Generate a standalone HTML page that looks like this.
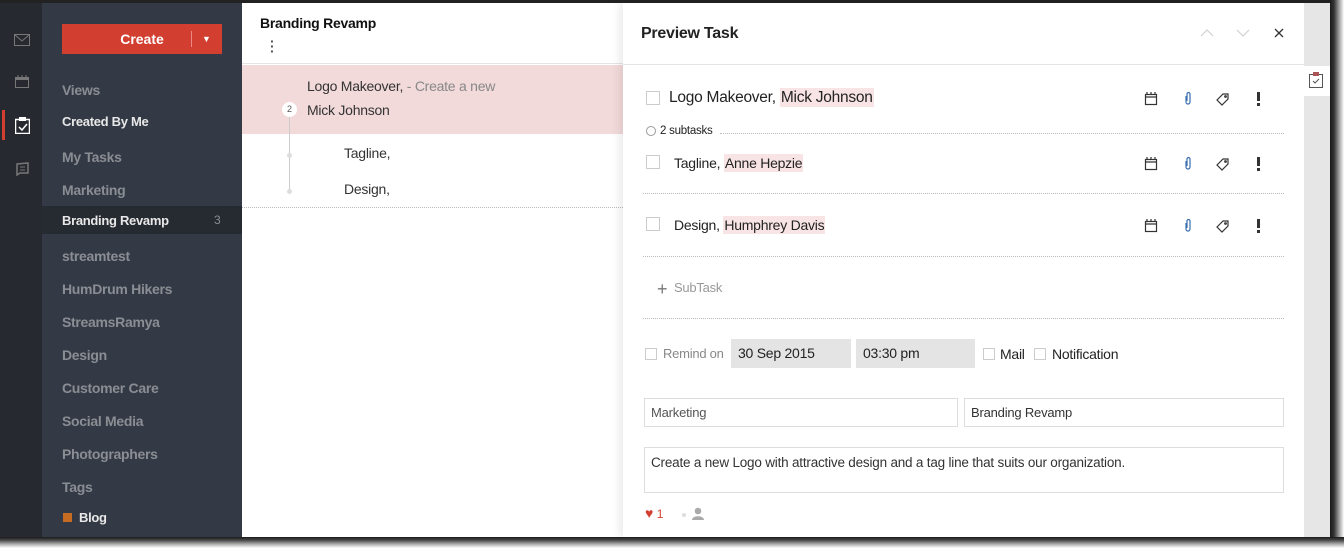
<!DOCTYPE html>
<html><head><meta charset="utf-8"><style>
*{box-sizing:border-box;margin:0;padding:0}
body{width:1344px;height:548px;background:#fff;font-family:"Liberation Sans",sans-serif;position:relative;overflow:hidden}
.abs{position:absolute}
.frame-top{left:0;top:0;width:1344px;height:3px;background:#222}
.frame-r{left:1330px;top:0;width:14px;height:548px;background:linear-gradient(90deg,#1a1a1a 0,#333 4px,#888 8px,#fff 14px)}
.frame-b{left:0;top:537px;width:1344px;height:11px;background:linear-gradient(#1a1a1a 0,#444 3px,#aaa 7px,#fff 11px)}
.icons{left:0;top:3px;width:42px;height:534px;background:#262a30}
.side{left:42px;top:3px;width:200px;height:534px;background:#343a45}
.side .it{position:absolute;left:20px;font-size:14px;font-weight:bold;color:#8a8d93;letter-spacing:-0.3px}
.side .w{color:#e8e8e8;font-size:13px}
.create{left:62px;top:24px;width:160px;height:30px;background:#d23f31;color:#fff;font-weight:bold;font-size:14px;text-align:center;line-height:30px}
.main{left:242px;top:3px;width:381px;height:534px;background:#fff}
.prev{left:623px;top:3px;width:681px;height:534px;background:#fff;box-shadow:-4px 0 8px rgba(0,0,0,.08)}
.gray{left:1304px;top:3px;width:26px;height:534px;background:#e6e6e6}
.cb{position:absolute;width:14px;height:14px;border:1px solid #ccc;background:#fff}
.hl{background:#f8e4e4;padding:1px 1px}
.dot{position:absolute;border-top:1px dotted #bbb;height:0}
.t{position:absolute;color:#222;white-space:nowrap;letter-spacing:-0.25px}
.inp{position:absolute;border:1px solid #ddd;height:29px;font-size:13px;line-height:27px;padding-left:6px;color:#333;letter-spacing:-0.2px}
</style></head><body>
<div class="abs frame-top"></div>
<div class="abs icons">
 <svg class="abs" style="left:14px;top:31px" width="16" height="12"><rect x="0.5" y="0.5" width="15" height="11" fill="none" stroke="#777"/><path d="M1 1l7 6 7-6" fill="none" stroke="#777"/></svg>
 <svg class="abs" style="left:15px;top:72px" width="14" height="13"><rect x="0.5" y="2.5" width="13" height="10" fill="none" stroke="#777"/><rect x="0" y="2" width="14" height="3" fill="#777"/><path d="M3 0v3M7 0v3M11 0v3" stroke="#777"/></svg>
 <div class="abs" style="left:2px;top:107px;width:3px;height:30px;background:#d23f31"></div>
 <svg class="abs" style="left:15px;top:114px" width="15" height="17"><rect x="0.5" y="2.5" width="14" height="14" fill="none" stroke="#fff" stroke-width="1.5"/><rect x="4" y="0" width="7" height="4" fill="#fff"/><path d="M4 10l3 3 5-6" fill="none" stroke="#fff" stroke-width="1.5"/></svg>
 <svg class="abs" style="left:15px;top:158px" width="15" height="15"><path d="M2 3l11-1 0 10-8 0-3 2z" fill="none" stroke="#777" stroke-width="1.5"/><path d="M5 6h5M5 9h5" stroke="#777"/></svg>
</div>
<div class="abs side">
 <div class="abs create" style="left:20px;top:21px">Create<span style="position:absolute;left:129px;top:7px;height:16px;border-left:1px solid #e88"></span><span style="position:absolute;left:140px;top:0;font-size:9px">▼</span></div>
 <div class="it" style="top:79px">Views</div>
 <div class="it w" style="top:111px">Created By Me</div>
 <div class="it" style="top:146px">My Tasks</div>
 <div class="it" style="top:179px">Marketing</div>
 <div style="position:absolute;left:0;top:203px;width:200px;height:28px;background:#262a31"></div>
 <div class="it w" style="top:210px">Branding Revamp</div>
 <div class="it" style="top:210px;left:172px;font-weight:normal;font-size:12px">3</div>
 <div class="it" style="top:245px">streamtest</div>
 <div class="it" style="top:278px">HumDrum Hikers</div>
 <div class="it" style="top:311px">StreamsRamya</div>
 <div class="it" style="top:344px">Design</div>
 <div class="it" style="top:377px">Customer Care</div>
 <div class="it" style="top:410px">Social Media</div>
 <div class="it" style="top:443px">Photographers</div>
 <div class="it" style="top:476px">Tags</div>
 <div style="position:absolute;left:21px;top:510px;width:9px;height:9px;background:#c66b22"></div>
 <div class="it w" style="top:507px;left:37px">Blog</div>
</div>
<div class="abs main">
 <div class="t" style="left:18px;top:12px;font-size:14px;font-weight:bold;color:#111">Branding Revamp</div>
 <div class="t" style="left:28px;top:36px;font-size:14px;font-weight:bold;color:#555;line-height:5px">·<br>·<br>·</div>
 <div style="position:absolute;left:0;top:60px;width:381px;height:1px;background:#e4e4e4"></div>
 <div style="position:absolute;left:0;top:62px;width:381px;height:69px;background:#f2d9da"></div>
 <div class="t" style="left:65px;top:75px;font-size:14px;color:#333">Logo Makeover, <span style="color:#888">- Create a new</span></div>
 <div class="t" style="left:65px;top:99px;font-size:14px;color:#333">Mick Johnson</div>
 <div style="position:absolute;left:40px;top:99px;width:15px;height:15px;border-radius:50%;background:#fff;font-size:9px;text-align:center;line-height:15px;color:#555">2</div>
 <div style="position:absolute;left:47px;top:114px;width:1px;height:73px;background:#ccc"></div>
 <div style="position:absolute;left:45px;top:150px;width:5px;height:5px;border-radius:50%;background:#ddd"></div>
 <div style="position:absolute;left:45px;top:186px;width:5px;height:5px;border-radius:50%;background:#ddd"></div>
 <div class="t" style="left:102px;top:142px;font-size:14px;color:#333">Tagline,</div>
 <div class="t" style="left:102px;top:178px;font-size:14px;color:#333">Design,</div>
 <div class="dot" style="left:0;top:204px;width:381px"></div>
</div>
<div class="abs prev">
 <div class="t" style="left:18px;top:22px;font-size:16px;font-weight:bold;color:#222">Preview Task</div>
 <svg class="abs" style="left:577px;top:26px" width="14" height="8"><path d="M1 7l6-6 6 6" fill="none" stroke="#ccc"/></svg>
 <svg class="abs" style="left:613px;top:26px" width="14" height="8"><path d="M1 1l6 6 6-6" fill="none" stroke="#ccc"/></svg>
 <svg class="abs" style="left:651px;top:25px" width="10" height="10"><path d="M1 1l8 8M9 1l-8 8" stroke="#333" stroke-width="1.3"/></svg>
 <div style="position:absolute;left:0;top:61px;width:681px;height:1px;background:#e4e4e4"></div>

 <div class="cb" style="left:23px;top:88px"></div>
 <div class="t" style="left:46px;top:86px;font-size:15.5px">Logo Makeover, <span class="hl">Mick Johnson</span></div>
 <svg class="abs" style="left:23px;top:123px" width="10" height="10"><circle cx="5" cy="5" r="4.5" fill="none" stroke="#999"/></svg>
 <div class="t" style="left:37px;top:122px;font-size:11.5px">2 subtasks</div>
 <div class="dot" style="left:97px;top:130px;width:564px"></div>

 <div class="cb" style="left:23px;top:152px"></div>
 <div class="t" style="left:51px;top:152px;font-size:14px">Tagline, <span class="hl">Anne Hepzie</span></div>
 <div class="dot" style="left:20px;top:190px;width:641px"></div>
 <div class="cb" style="left:23px;top:214px"></div>
 <div class="t" style="left:51px;top:214px;font-size:14px">Design, <span class="hl">Humphrey Davis</span></div>
 <div class="dot" style="left:20px;top:253px;width:641px"></div>

 <div class="t" style="left:34px;top:276px;font-size:18px;color:#777">+</div>
 <div class="t" style="left:51px;top:277px;font-size:13px;color:#999">SubTask</div>
 <div class="dot" style="left:20px;top:315px;width:641px"></div>

 <div class="cb" style="left:22px;top:345px;width:12px;height:12px"></div>
 <div class="t" style="left:40px;top:343px;font-size:13px;color:#888">Remind on</div>
 <div class="t" style="left:108px;top:336px;width:120px;height:29px;background:#e4e4e4;font-size:14px;line-height:29px;padding-left:7px">30 Sep 2015</div>
 <div class="t" style="left:233px;top:336px;width:119px;height:29px;background:#e4e4e4;font-size:14px;line-height:29px;padding-left:7px">03:30 pm</div>
 <div class="cb" style="left:360px;top:345px;width:12px;height:12px"></div>
 <div class="t" style="left:377px;top:343px;font-size:14px">Mail</div>
 <div class="cb" style="left:411px;top:345px;width:12px;height:12px"></div>
 <div class="t" style="left:429px;top:343px;font-size:14px">Notification</div>

 <div class="inp" style="left:21px;top:395px;width:314px;color:#555">Marketing</div>
 <div class="inp" style="left:341px;top:395px;width:320px">Branding Revamp</div>
 <div class="inp" style="left:21px;top:444px;width:640px;height:46px;line-height:normal;padding-top:7px;font-size:13.5px">Create a new Logo with attractive design and a tag line that suits our organization.</div>
 <div class="t" style="left:22px;top:502px;font-size:14px;color:#d23f31">♥ <span style="font-size:12px">1</span></div>
 <div style="position:absolute;left:59px;top:510px;width:4px;height:4px;border-radius:50%;background:#ddd"></div>
 <svg class="abs" style="left:69px;top:504px" width="12" height="13"><circle cx="6" cy="4" r="3.3" fill="#aaa"/><path d="M0 13c0-5 12-5 12 0z" fill="#aaa"/></svg>
</div>
<svg class="abs" style="left:0;top:0" width="1344" height="548" pointer-events="none">
 <g fill="none" stroke="#333" stroke-width="1.2">
  <g id="r1">
   <rect x="1145.5" y="94.5" width="11" height="10"/><path d="M1145 97h12M1147 92v3M1151 92v3M1155 92v3"/>
   <path d="M1186 96v6a2 2 0 0 0 4 0v-8a1.5 1.5 0 0 0-3 0v7" stroke="#3a6fb0"/>
   <path d="M1217 100l6-6 5 0 0 5-6 6z"/><circle cx="1225.5" cy="96.5" r="0.8"/>
  </g>
  <use href="#r1" y="65"/><use href="#r1" y="127"/>
 </g>
 <g fill="#333"><rect x="1257" y="92" width="3" height="9"/><rect x="1257" y="103" width="3" height="3"/>
  <rect x="1257" y="157" width="3" height="9"/><rect x="1257" y="168" width="3" height="3"/>
  <rect x="1257" y="219" width="3" height="9"/><rect x="1257" y="230" width="3" height="3"/></g>
</svg>
<div class="abs gray"></div>
<div class="abs" style="left:1304px;top:66px;width:26px;height:30px;background:#fff"></div>
<svg class="abs" style="left:1309px;top:72px" width="14" height="16"><rect x="0.5" y="2.5" width="13" height="13" fill="none" stroke="#555"/><rect x="4" y="0" width="6" height="4" fill="#a55"/><path d="M4 9l2 2 4-4" fill="none" stroke="#555"/></svg>
<div class="abs frame-r"></div>
<div class="abs frame-b"></div>
</body></html>
